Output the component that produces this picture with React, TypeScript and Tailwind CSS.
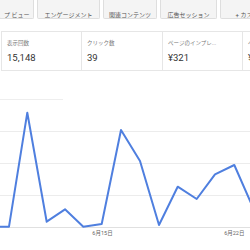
import React from 'react';

const tabs = [
  { label: 'プ ビュー', w: 'w-[35px]' },
  { label: 'エンゲージメント', w: 'w-[63px]' },
  { label: '関連コンテンツ', w: 'w-[54px]' },
  { label: '広告セッション', w: 'w-[57px]' },
  { label: '+ カスタム', w: 'w-[60px]' },
];

const cards = [
  { label: '表示回数', value: '15,148', w: 'w-[80px]' },
  { label: 'クリック数', value: '39', w: 'w-[81px]' },
  { label: 'ページのインプレ...', value: '¥321', w: 'w-[80px]' },
  { label: 'ページ RPM', value: '¥21', w: 'w-[60px]' },
];

const points: [number, number][] = [
  [-12, 126.7],
  [9, 126.7],
  [27.3, 12.7],
  [46.7, 121.7],
  [65, 109.3],
  [83.3, 126.7],
  [101.7, 124],
  [121, 30],
  [140, 61],
  [159, 125],
  [177.7, 86.7],
  [196.7, 99],
  [215, 74.3],
  [234.3, 65],
  [253.2, 108],
];

export default function App() {
  const font = { fontFamily: 'Roboto, "Noto Sans CJK JP", sans-serif' };
  return (
    <div className="w-[250px] h-[250px] overflow-hidden bg-white" style={font}>
      <div className="flex gap-[3px] whitespace-nowrap -ml-[1px]">
        {tabs.map((t) => (
          <div
            key={t.label}
            className={`${t.w} shrink-0 h-[19px] pt-[10px] px-[4px] bg-[#f4f4f4] border border-t-0 border-[#dedede] rounded-b-[2px] text-[6px] leading-[9px] text-[#555] text-center overflow-hidden`}
          >
            {t.label}
          </div>
        ))}
      </div>

      <div className="mt-[12px] ml-[1px] flex h-[40px] border-y border-[#e6e6e6] whitespace-nowrap">
        {cards.map((c) => (
          <div key={c.label} className={`${c.w} shrink-0 border-l border-[#e6e6e6] pl-[5px] overflow-hidden`}>
            <div className="pt-[8px] text-[5.5px] leading-[7px] text-[#777]">{c.label}</div>
            <div className="mt-[4px] text-[9.5px] leading-[13px] text-[#333]">{c.value}</div>
          </div>
        ))}
      </div>

      <div className="mt-[28px] h-px w-[63px] bg-[#eeeeee]" />

      <svg width="250" height="150" className="block">
        {[31, 63, 95].map((y) => (
          <line key={y} x1="0" x2="250" y1={y + 0.5} y2={y + 0.5} stroke="#ececec" strokeWidth="1" />
        ))}
        <line x1="0" x2="250" y1="127.5" y2="127.5" stroke="#e0e0e0" strokeWidth="1" />
        <polyline
          points={points.map((p) => p.join(',')).join(' ')}
          fill="none"
          stroke="#4f7fdf"
          strokeWidth="2"
          strokeLinejoin="round"
        />
        <text x="102.5" y="135" textAnchor="middle" fontSize="5.5" fill="#666" style={font}>
          6月15日
        </text>
        <text x="234.3" y="135" textAnchor="middle" fontSize="5.5" fill="#666" style={font}>
          6月22日
        </text>
      </svg>
    </div>
  );
}
